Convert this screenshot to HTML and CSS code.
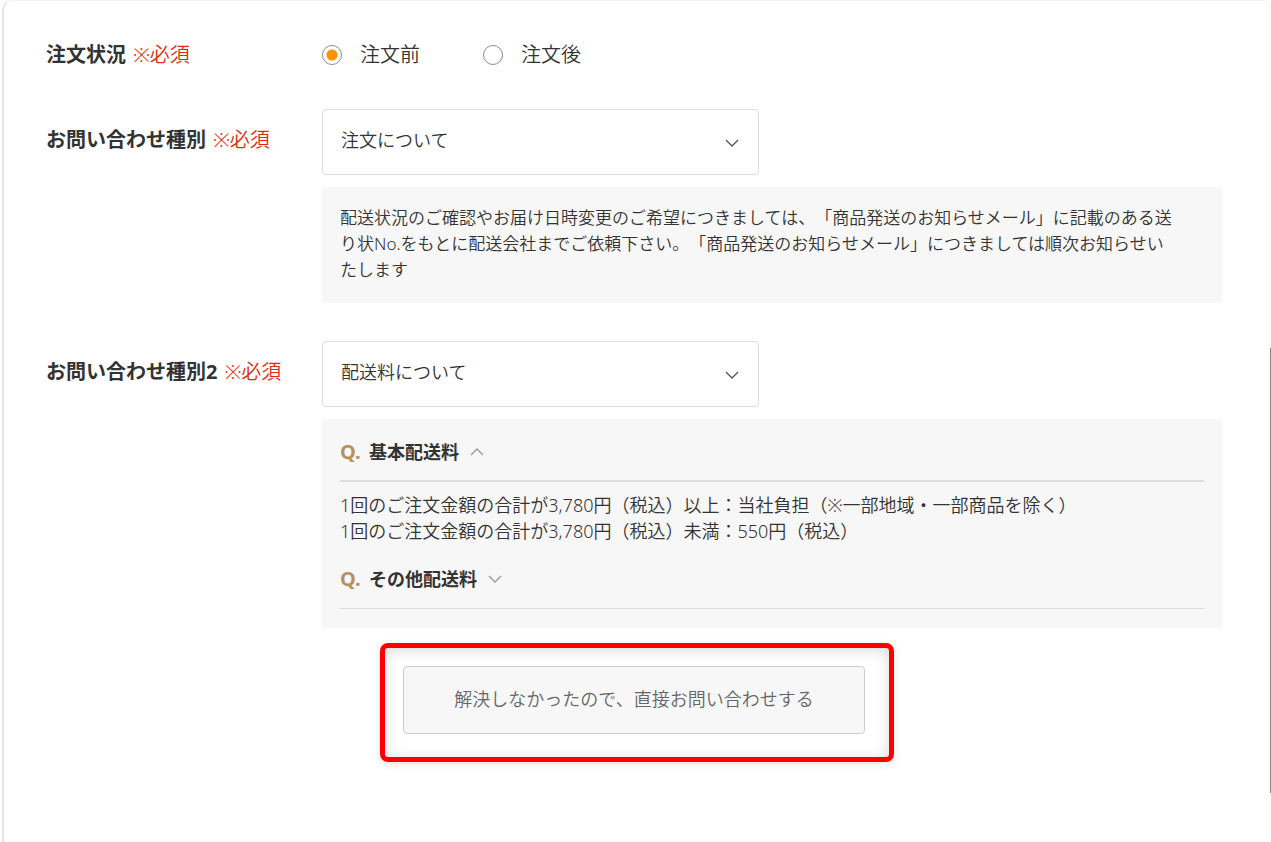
FILE: index.html
```html
<!DOCTYPE html>
<html lang="ja">
<head>
    <meta charset="UTF-8">
    <meta name="viewport" content="width=device-width, initial-scale=1.0">
    <title>お問い合わせ</title>
    <link rel="stylesheet" href="styles.css">
</head>
<body>
    <form class="contact-form">
        <div class="form-row" role="radiogroup" aria-labelledby="statusLabel">
            <div class="form-label" id="statusLabel">注文状況 <span class="required">※必須</span></div>
            <div class="radio-group">
                <label class="radio"><input type="radio" name="status" checked>注文前</label>
                <label class="radio"><input type="radio" name="status">注文後</label>
            </div>
        </div>

        <div class="form-row">
            <label class="form-label select-label" for="category">お問い合わせ種別 <span class="required">※必須</span></label>
            <div class="form-field">
                <div class="select-box">
                    <select id="category">
                        <option>注文について</option>
                    </select>
                    <svg class="arrow" viewBox="0 0 14 8"><path d="M1 1l6 6 6-6"/></svg>
                </div>
                <p class="panel note">配送状況のご確認やお届け日時変更のご希望につきましては、「商品発送のお知らせメール」に記載のある送<br>り状No.をもとに配送会社までご依頼下さい。「商品発送のお知らせメール」につきましては順次お知らせい<br>たします</p>
            </div>
        </div>

        <div class="form-row">
            <label class="form-label select-label" for="subcategory">お問い合わせ種別2 <span class="required">※必須</span></label>
            <div class="form-field">
                <div class="select-box">
                    <select id="subcategory">
                        <option>配送料について</option>
                    </select>
                    <svg class="arrow" viewBox="0 0 14 8"><path d="M1 1l6 6 6-6"/></svg>
                </div>
                <div class="panel faq">
                    <button type="button" class="question open" aria-expanded="true">
                        <span class="q-mark">Q.</span>基本配送料
                        <svg class="q-arrow" viewBox="0 0 14 8"><path d="M1 7l6-6 6 6"/></svg>
                    </button>
                    <p class="answer">1回のご注文金額の合計が3,780円（税込）以上：当社負担（※一部地域・一部商品を除く）<br>1回のご注文金額の合計が3,780円（税込）未満：550円（税込）</p>
                    <button type="button" class="question" aria-expanded="false">
                        <span class="q-mark">Q.</span>その他配送料
                        <svg class="q-arrow" viewBox="0 0 14 8"><path d="M1 1l6 6 6-6"/></svg>
                    </button>
                </div>
            </div>
        </div>

        <div class="form-action">
            <div class="highlight">
                <button type="button" class="contact-button">解決しなかったので、直接お問い合わせする</button>
            </div>
        </div>
    </form>
    <div class="scroll-track"><div class="scroll-thumb"></div></div>
</body>
</html>
```

FILE: styles.css
```css
* {
    box-sizing: border-box;
}
body {
    margin: 0;
    background-color: #fff;
    color: #333;
    font-family: "Noto Sans", "Noto Sans CJK JP", sans-serif;
    font-size: 18px;
    font-weight: 350;
    line-height: 26px;
    text-spacing-trim: space-all;
}
button, select {
    font-family: inherit;
    font-weight: inherit;
    color: inherit;
}
.contact-form {
    display: flex;
    flex-direction: column;
    gap: 38px;
    min-height: 100vh;
    margin-left: 2px;
    padding: 39px 49px 40px 42px;
    border-left: 2px solid #e4e4e4;
    border-top: 1px solid #f3f3f3;
    border-top-left-radius: 10px;
}
.form-row {
    display: grid;
    grid-template-columns: 276px 1fr;
}
.form-row:first-child {
    padding-bottom: 1px;
}
.form-label {
    font-size: 20px;
    font-weight: bold;
    line-height: 30px;
}
.select-label {
    padding-top: 16px;
}
.required {
    margin-left: 2px;
    color: #e22b0b;
    font-weight: 350;
}

/* radio buttons */
.radio-group {
    display: flex;
    gap: 63px;
}
.radio {
    display: flex;
    align-items: center;
    gap: 18px;
    font-size: 20px;
    line-height: 30px;
}
.radio input {
    appearance: none;
    width: 20px;
    height: 20px;
    margin: 0;
    border: 1px solid #8c8c8c;
    border-radius: 50%;
}
.radio input:checked {
    background: radial-gradient(circle, #ff9100 5px, #fff 6px);
}

/* select boxes */
.select-box {
    position: relative;
    max-width: 437px;
}
.select-box select {
    appearance: none;
    display: block;
    width: 100%;
    height: 66px;
    padding: 0 50px 4px 18px;
    border: 1px solid #ddd;
    border-radius: 4px;
    background-color: #fff;
    font-size: 18px;
}
.arrow {
    position: absolute;
    right: 20px;
    top: 30px;
    width: 14px;
    height: 8px;
    fill: none;
    stroke: #555;
    stroke-width: 1.3;
}

.panel {
    margin: 12px 0 0;
    padding: 18px;
    background-color: #f7f7f7;
}
.note {
    padding-bottom: 20px;
    font-size: 17px;
}
.faq {
    padding-bottom: 19px;
}
.question {
    display: flex;
    align-items: center;
    width: 100%;
    padding: 0 0 14px;
    border: none;
    border-bottom: 1px solid #ddd;
    background: none;
    font-size: 18px;
    font-weight: bold;
    line-height: 30px;
    cursor: pointer;
}
.question.open {
    padding-bottom: 13px;
    border-bottom-width: 2px;
}
.q-mark {
    width: 29px;
    color: #b69260;
    font-size: 20px;
    text-align: left;
}
.q-arrow {
    width: 14px;
    height: 8px;
    margin-left: 11px;
    fill: none;
    stroke: #999;
    stroke-width: 1.3;
}
.answer {
    margin: 0;
    padding: 10px 0 20px;
}

.form-action {
    display: flex;
    justify-content: center;
}
.highlight {
    position: relative;
    width: 462px;
}
.highlight::before {
    content: "";
    position: absolute;
    inset: -23px -29px -28px -23px;
    border: 5px solid #f00;
    border-radius: 8px;
    box-shadow: 0 2px 8px rgba(0, 0, 0, 0.1), inset 0 2px 14px rgba(0, 0, 0, 0.15);
    pointer-events: none;
}
.contact-button {
    width: 100%;
    height: 68px;
    padding: 0 0 4px;
    border: 1px solid #ccc;
    border-radius: 4px;
    background-color: #f7f7f7;
    color: #666;
    font-size: 18px;
    cursor: pointer;
}

/* thin scrollbar on the window edge */
.scroll-track {
    position: fixed;
    top: 0;
    right: 0;
    bottom: 0;
    width: 5px;
    background-color: #fcfcfc;
}
.scroll-thumb {
    position: absolute;
    top: 348px;
    right: 0;
    width: 1px;
    height: 445px;
    background-color: #858585;
}
```
